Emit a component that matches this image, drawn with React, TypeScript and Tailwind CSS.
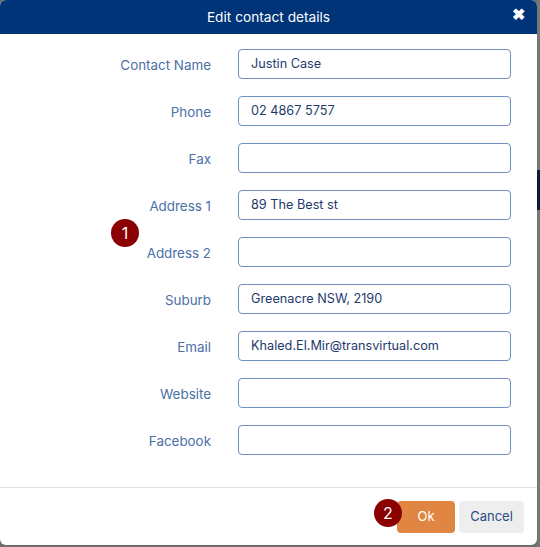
import React from "react";

const rows: { label: string; value: string }[] = [
  { label: "Contact Name", value: "Justin Case" },
  { label: "Phone", value: "02 4867 5757" },
  { label: "Fax", value: "" },
  { label: "Address 1", value: "89 The Best st" },
  { label: "Address 2", value: "" },
  { label: "Suburb", value: "Greenacre NSW, 2190" },
  { label: "Email", value: "Khaled.El.Mir@transvirtual.com" },
  { label: "Website", value: "" },
  { label: "Facebook", value: "" },
];

export default function App() {
  return (
    <div
      className="w-[540px] h-[547px] bg-[#6e6e6e] flex overflow-hidden"
      style={{ fontFamily: "Inter, 'Liberation Sans', sans-serif" }}
    >
      <div className="w-[537px] h-[545px] bg-white rounded-[6px] flex flex-col overflow-hidden">
        <div className="h-[34px] bg-[#003478] flex items-center justify-center relative shrink-0">
          <span className="text-white text-[13.7px]">Edit contact details</span>
          <span className="absolute right-[12px] top-[6px] text-white text-[16px] font-bold leading-none">✖</span>
        </div>
        <div className="flex flex-col gap-[17px] pt-[15px] pb-[32px] relative">
          {rows.map((r) => (
            <div key={r.label} className="flex items-center h-[30px]">
              <div className="w-[211px] text-right text-[13.4px] text-[#4b70a6] pt-[2px]">
                {r.label}
              </div>
              <div className="ml-[27px] w-[273px] h-[30px] border border-[#6f8fc0] rounded-[4px] flex items-center px-[12px] text-[12.7px] text-[#1e3a6d]">
                {r.value}
              </div>
            </div>
          ))}
          <div className="absolute left-[111px] top-[185px] w-[28px] h-[28px] rounded-full bg-[#8b0000] text-white text-[16px] flex items-center justify-center">
            1
          </div>
        </div>
        <div className="border-t border-[#e2e2e2] flex justify-end items-start pt-[13px] pr-[13px] gap-[4px] relative flex-1">
          <div className="relative">
            <div className="absolute left-[-23px] top-[-2px] w-[28px] h-[28px] rounded-full bg-[#8b0000] text-white text-[16px] flex items-center justify-center z-10">
              2
            </div>
            <button className="w-[58px] h-[32px] rounded-[4px] bg-[#e08642] text-white text-[13px]">Ok</button>
          </div>
          <button className="w-[65px] h-[32px] rounded-[4px] bg-[#eeeeee] text-[#2c4d85] text-[13px]">Cancel</button>
        </div>
      </div>
      <div className="w-[3px] flex flex-col">
        <div className="h-[170px] bg-[#777777]" />
        <div className="h-[40px] bg-[#0c1c33]" />
        <div className="flex-1 bg-[#777777]" />
      </div>
    </div>
  );
}
